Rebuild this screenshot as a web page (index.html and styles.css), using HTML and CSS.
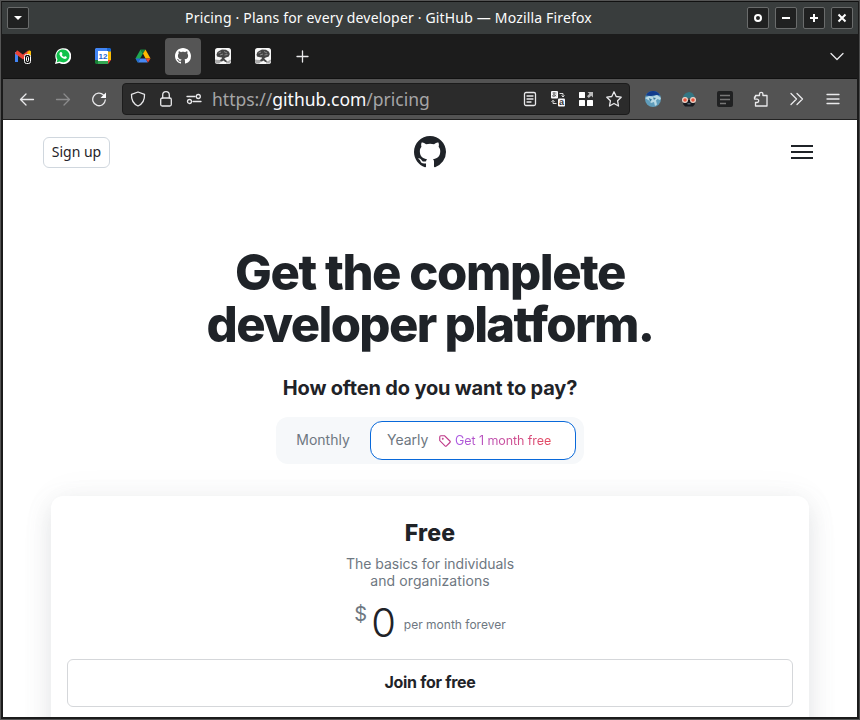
FILE: index.html
```
<!DOCTYPE html>
<html lang="en">
<head>
<meta charset="utf-8">
<title>Pricing · Plans for every developer · GitHub</title>
<link rel="stylesheet" href="styles.css">
</head>
<body>
<svg class="defs" width="0" height="0">
  <symbol id="mark" viewBox="0 0 16 16"><path d="M8 0C3.580 0 0 3.580 0 8c0 3.540 2.290 6.530 5.470 7.590.4.070.55-.17.55-.38 0-.19-.01-.82-.01-1.490-2.010.37-2.530-.49-2.690-.94-.09-.23-.48-.94-.82-1.130-.28-.15-.68-.52-.01-.53.63-.01 1.080.58 1.230.82.72 1.210 1.870.87 2.330.66.07-.52.28-.87.51-1.070-1.780-.2-3.640-.89-3.640-3.950 0-.87.31-1.590.82-2.150-.08-.2-.36-1.020.08-2.120 0 0 .67-.21 2.200.82.64-.18 1.320-.27 2-.27s1.360.09 2 .27c1.530-1.040 2.200-.82 2.200-.82.44 1.100.16 1.920.08 2.120.51.56.82 1.270.82 2.150 0 3.070-1.870 3.750-3.650 3.950.29.25.54.73.54 1.480 0 1.070-.01 1.930-.01 2.200 0 .21.15.46.55.38A8.010 8.010 0 0 0 16 8c0-4.420-3.580-8-8-8z"/></symbol>
  <symbol id="tree" viewBox="0 0 16 16"><rect width="16" height="16" rx="2.5" fill="#f6f6f6"/><path d="M1.500 6.500l1-2.500L5 2.500l2-1 4 .3 3 2 .8 2.200-1 2.500-3 1-1.500.8.5 1 3 2.500-2.500.2-2-1.500L7 13.500l-4-.3L6.500 11 7 9.500 5 9.300l-3-.8z" fill="#444"/><path d="M3.500 5l2.500-1M5 7l3-1M9 3.500l3 1.500M9.500 7l3-.5" stroke="#999" stroke-width=".8"/><path d="M0 11.500l4.500.5 2 1.500L4 15.500H2.500A2.500 2.500 0 0 1 0 13zM11 14l5-2.500V13l-2 2.500h-3z" fill="#aaa"/></symbol>
</svg>
<div class="window">
  <header class="titlebar">
    <span class="wbtn"><svg width="20" height="20"><path d="M6 8h8l-4 4z" fill="#fff"/></svg></span>
    <span class="title">Pricing · Plans for every developer · GitHub — Mozilla Firefox</span>
    <span class="wbtns">
      <span class="wbtn"><svg width="20" height="20"><circle cx="10" cy="10" r="3" class="wl"/></svg></span>
      <span class="wbtn"><svg width="20" height="20"><path d="M6 10h8" class="wl"/></svg></span>
      <span class="wbtn"><svg width="20" height="20"><path d="M6 10h8M10 6v8" class="wl"/></svg></span>
      <span class="wbtn"><svg width="20" height="20"><path d="M6.500 6.500l7 7M13.500 6.500l-7 7" class="wl"/></svg></span>
    </span>
  </header>
  <nav class="tabs">
    <span class="tab"><svg width="16" height="16"><path d="M1.500 14V4" stroke="#4285f4" stroke-width="3"/><path d="M14.500 8V4" stroke="#fbbc04" stroke-width="3"/><path d="M1 3.800l7 5.200 6.500-5.200" fill="none" stroke="#ea4335" stroke-width="3.800"/><path d="M12.300 4.500L14.500 2.300 16 3.200V6l-3.700 2.600z" fill="#fbbc04"/><rect x="9.500" y="6.500" width="6" height="9" rx="2" fill="#111" stroke="#fff"/><rect x="11.500" y="8.500" width="2" height="5" rx="1" fill="none" stroke="#fff"/></svg></span>
    <span class="tab"><svg width="16" height="16"><path d="M0 16l1.200-4.200A8 8 0 1 1 4.200 15z" fill="#fff"/><path d="M1.700 14.300l.8-2.900A6.500 6.500 0 1 1 4.700 13.500z" fill="#10c24b"/><path d="M5.500 4l1.300.2.700 1.700-.7 1c.5 1 1.300 1.700 2.300 2.200l1-1 1.700.9c0 1.800-1.500 2.200-2.800 1.800C6.700 10.200 5 8.200 4.500 6.500c-.2-1 .2-1.900 1-2.500z" fill="#fff"/></svg></span>
    <span class="tab"><svg width="16" height="16"><path d="M1 0h11v3.500H3V12H0V1z" fill="#4285f4"/><path d="M12 0h3l1 1v3h-4z" fill="#1967d2"/><path d="M13 3.500h3V12h-3z" fill="#fbbc04"/><path d="M3 13h10v3H3z" fill="#34a853"/><path d="M0 12h3v4H1l-1-1z" fill="#188038"/><path d="M13 12h3l-3 4z" fill="#ea4335"/><path d="M3 3h10v10H3z" fill="#fff"/><text x="8" y="11.300" class="cal">12</text></svg></span>
    <span class="tab"><svg width="16" height="16"><path d="M5.500 1.500L.5 10.500l2.300 4L8 5.500z" fill="#20a652"/><path d="M5.500 1.500h5L8 5.500z" fill="#17813b"/><path d="M10.500 1.500l5 9h-5L8 5.500z" fill="#ffba00"/><path d="M5.300 10.500h5.200l2.300 4h-10z" fill="#4688f4"/><path d="M.5 10.500h4.800l-2.500 4z" fill="#2468db"/><path d="M10.500 10.500h5l-2.500 4z" fill="#ea4335"/></svg></span>
    <span class="tab active"><svg width="16" height="16" fill="#fff"><use href="#mark"/></svg></span>
    <span class="tab"><svg width="16" height="16"><use href="#tree"/></svg></span>
    <span class="tab"><svg width="16" height="16"><use href="#tree"/></svg></span>
    <span class="tab"><svg class="ln" width="16" height="16"><path d="M2 8.500h11M7.500 3v11"/></svg></span>
    <span class="tab last"><svg class="ln" width="16" height="16"><path d="M2 5.500l6 6 6-6"/></svg></span>
  </nav>
  <div class="toolbar">
    <span class="ic"><svg class="ln" width="16" height="16"><path d="M14.500 8.500H2M7 3L1.500 8.500 7 14"/></svg></span>
    <span class="ic"><svg class="ln dim" width="16" height="16"><path d="M1.500 8.500h13M9 3l5.500 5.500L9 14"/></svg></span>
    <span class="ic"><svg class="ln" width="16" height="16"><path d="M14.300 9A6.300 6.300 0 1 1 12.500 4"/><path d="M15 1.500v5.500H9.500z" fill="#fbfbfe" stroke="none"/></svg></span>
    <div class="url">
      <svg class="ln" width="16" height="16"><path d="M8 1l6.500 2.300C14.800 8.500 12.500 13 8 15 3.500 13 1.200 8.500 1.500 3.300z"/></svg>
      <svg class="ln" width="16" height="16"><rect x="2.700" y="7" width="10.600" height="8" rx="1.500"/><path d="M4.700 7V4a3.300 3.300 0 0 1 6.600 0v3"/></svg>
      <svg class="ln" width="16" height="16"><path d="M1 5.500h8M7 10.500h8"/><circle cx="12.300" cy="5.500" r="2"/><circle cx="3.500" cy="10.500" r="2"/></svg>
      <span class="addr">https://<b>github.com</b>/pricing</span>
      <svg class="ln" width="16" height="16"><rect x="2.500" y="1.500" width="11" height="13" rx="1.500"/><path d="M5 5h6M5 8h6M5 11h4"/></svg>
      <svg width="16" height="16"><rect x="1" width="7" height="7.500" rx="1" fill="#fbfbfe"/><path d="M2.500 2h4M4 1v4.500M6 3.500c-.5 2-3.500 2.800-3.500 1.300S6 3.500 6 5.500" stroke="#555" stroke-width=".8" fill="none"/><rect x="8" y="7.500" width="7" height="8" rx="1" fill="#fbfbfe"/><text x="11.500" y="14" class="tra">a</text><path d="M9.500 2.500h3.500v3M11.500 4.500L13 6l1.500-1.500M6.500 12.500H3v-3M1.500 10.800L3 9.300l1.500 1.500" stroke="#ddd" fill="none"/></svg>
      <svg width="16" height="16" fill="#fff"><rect x="1" y="1" width="6" height="6" rx=".5"/><rect x="1" y="9" width="6" height="6" rx=".5"/><rect x="9" y="9" width="6" height="6" rx=".5"/><path d="M9.500 1H15v5.500l-1.800-1.800L10.800 7 9 5.200l2.400-2.400z" fill="#bbb"/></svg>
      <svg class="ln" width="16" height="16"><path d="M8 .8l2.200 4.700 5 .7-3.600 3.600.9 5.200L8 12.500 3.500 15l.9-5.200L.8 6.200l5-.7z"/></svg>
    </div>
    <span class="ic"><svg width="16" height="16"><circle cx="8" cy="8" r="8" fill="#5f9dbb"/><path d="M.8 4.500A8 8 0 0 1 15.200 4.500L11 4 6 5z" fill="#123c8c"/><path d="M0 7l4-2 4 .5L12 4l4 3-1 2-2.500-1L11 9.500l1 4-2 1.500-1-4-3 1-2-2.500z" fill="#b9d9e4"/><path d="M4 7l3 1.500L5 11zM8 6.500l3 .5-2 2z" fill="#397b9c"/></svg></span>
    <span class="ic"><svg width="16" height="16"><path d="M2 7c0-3 2-4 3-5l3-1c3 0 5 2 6 6z" fill="#337683"/><path d="M3 9h10l1 4-2 2.500H4L2 13z" fill="#171a20"/><circle cx="4" cy="9" r="2.400" fill="#e8533b" stroke="#ead6cb" stroke-width="1.200"/><circle cx="12" cy="9" r="2.400" fill="#e8533b" stroke="#ead6cb" stroke-width="1.200"/><path d="M6.500 12h3v1.500h-3z" fill="#567"/></svg></span>
    <span class="ic"><svg width="16" height="16"><rect width="16" height="16" rx="2" fill="#202122"/><path d="M3 4.500h10M3 8.500h10M3 12.500h6" stroke="#777" stroke-width="1.500"/></svg></span>
    <span class="ic"><svg class="ln" width="16" height="16"><path d="M2.500 6V4.500h4V3a1.700 1.700 0 0 1 3.400 0v1.500H14V15H2.500v-3.500H4a1.700 1.700 0 0 0 0-3.400H1.500V6z"/></svg></span>
    <span class="ic"><svg class="ln" width="16" height="16"><path d="M2 2.500L7.500 8 2 13.500M8 2.500L13.500 8 8 13.500"/></svg></span>
    <span class="ic"><svg class="ln" width="16" height="16"><path d="M2 3.500h12M2 8h12M2 12.500h12"/></svg></span>
  </div>
  <main class="page">
    <div class="sitebar">
      <a class="signup">Sign up</a>
      <svg width="32" height="32" fill="#1f2328"><use href="#mark"/></svg>
      <span class="burger"><i></i><i></i><i></i></span>
    </div>
    <h1><span class="l1">Get the complete</span><br><span class="l2">developer platform.</span></h1>
    <h2>How often do you want to pay?</h2>
    <div class="toggle">
      <span class="opt">Monthly</span>
      <span class="opt on"><span class="yr">Yearly</span><svg width="12" height="12" viewBox="0 0 16 16" fill="none" stroke="#bf3989" stroke-width="1.500"><path d="M1 2.500Q1 1 2.500 1h5l7 7q1 1 0 2L10 14.500q-1 1-2 0l-7-7z"/><circle cx="5" cy="5" r=".5"/></svg><span class="promo">Get 1 month free</span></span>
    </div>
    <section class="card">
      <h3>Free</h3>
      <p class="desc"><span class="d1">The basics for individuals</span><br><span class="d2">and organizations</span></p>
      <div class="price"><span class="cur">$</span><span class="num">0</span><span class="per">per month forever</span></div>
      <a class="join"><span>Join for free</span></a>
    </section>
  </main>
</div>
</body>
</html>
```
FILE: styles.css
```
* { box-sizing: border-box; }
html, body { margin: 0; height: 720px; overflow: hidden; }
body { background: #1d1e1e; font-family: "Noto Sans", sans-serif; }
svg { display: block; flex: none; }
.defs { position: absolute; }
.window { height: 720px; border: 1px solid #555; border-right-color: #4a4a4a; padding: 0 2px 2px; display: flex; flex-direction: column; background: #1b1b1b; }
.titlebar { height: 33px; flex: none; background: #393d3d; border-top: 1px solid #111; margin: 0 -1px; padding: 0 5px; display: flex; align-items: center; }
.title { flex: 1; margin-left: 1px; padding-bottom: 2px; text-align: center; color: #fcfcfc; font-size: 14px; letter-spacing: .17px; white-space: nowrap; }
.wbtns { display: flex; gap: 6px; }
.wbtn { width: 22px; height: 22px; border: 1px solid #6a6c6c; border-radius: 2px; background: #202121; display: block; }
.wl { fill: none; stroke: #fff; stroke-width: 2; }
.tabs { height: 45px; flex: none; background: #1c1c1c; border-bottom: 1px solid #111; display: flex; align-items: center; padding: 0 2px; gap: 4px; }
.tab { width: 36px; height: 37px; display: flex; align-items: center; justify-content: center; border-radius: 4px; }
.tab.active { background: #555; }
.tab.last { margin-left: auto; }
.ln { fill: none; stroke: #e9e9eb; stroke-width: 1.3; stroke-linejoin: round; stroke-linecap: round; }
.ln.dim { stroke: #8b8b8c; }
.cal { font: bold 8px "Liberation Sans", sans-serif; fill: #2467cf; text-anchor: middle; }
.tra { font: bold 9px "Liberation Sans", sans-serif; fill: #333; text-anchor: middle; }
.toolbar { height: 41px; flex: none; background: #535353; border-bottom: 1px solid #222; display: flex; align-items: center; padding: 0 6px; }
.ic { width: 36px; height: 36px; display: flex; align-items: center; justify-content: center; }
.url { flex: 1; height: 32px; margin: 0 5px 0 5px; background: #2b2b2b; border: 1px solid #1c1c1c; border-radius: 4px; display: flex; align-items: center; padding: 0 7px; gap: 12px; color: #a5a5a6; }
.addr { flex: 1; font-size: 17.500px; line-height: 28px; white-space: nowrap; margin-left: -2px; }
.addr b { font-weight: 400; color: #fbfbfe; }
.page { flex: 1; min-height: 0; overflow: hidden; background: #fff; color: #1f2328; display: flex; flex-direction: column; align-items: center; text-align: center; font-family: Inter, sans-serif; }
.sitebar { width: 774px; height: 64px; flex: none; display: grid; grid-template-columns: 1fr 32px 1fr; align-items: center; }
.signup { justify-self: start; width: 67px; height: 31px; border: 1px solid #d0d7de; border-radius: 6px; font: 14px/27px "Noto Sans", sans-serif; }
.burger { justify-self: end; display: grid; gap: 4px; margin-right: 4px; }
.burger i { display: block; width: 22px; height: 2px; background: #1f2328; }
h1 { font-size: 49px; line-height: 52px; font-weight: 800; margin: 63px 0 0; white-space: nowrap; }
.l1 { letter-spacing: -1.450px; }
.l2 { letter-spacing: -1.680px; }
h2 { font-size: 20px; line-height: 28px; margin: 23px 0 15px; font-weight: 700; letter-spacing: -.18px; white-space: nowrap; }
.toggle { width: 308px; height: 47px; flex: none; background: #f6f8fa; border-radius: 12px; padding: 4px 8px 4px 4px; display: flex; color: #6e7781; font-size: 14px; line-height: 37px; }
.opt { width: 90px; padding-right: 4px; white-space: nowrap; }
.opt.on { width: 206px; height: 39px; background: #fff; border: 1px solid #0969da; border-radius: 12px; display: flex; align-items: center; padding: 0 0 0 16px; }
.yr { width: 52px; text-align: left; padding-bottom: 2px; }
.promo { font-size: 12.500px; letter-spacing: -.07px; margin-left: 4px; background: linear-gradient(90deg, #a857e5, #e5485d); -webkit-background-clip: text; background-clip: text; color: transparent; }
.card { width: 758px; height: 400px; flex: none; margin-top: 32px; border-radius: 12px; padding: 23px 16px; background: #fff; box-shadow: 0 8px 24px rgba(140,149,159,.2), 0 0 40px rgba(0,0,0,.04); }
h3 { font-size: 23px; line-height: 28px; margin: 0; font-weight: 800; letter-spacing: .2px; }
.desc { margin: 8px 0 0; font-size: 14px; line-height: 17px; color: #6e7781; }
.d1 { letter-spacing: -.03px; }
.d2 { letter-spacing: .1px; }
.price { height: 51px; margin-top: 9px; display: flex; justify-content: center; }
.cur { font-size: 20px; line-height: 32px; color: #6e7781; }
.num { font-size: 40px; line-height: 50px; font-weight: 300; margin-left: 4px; }
.per { font-size: 12px; line-height: 53px; color: #6e7781; margin-left: 8px; }
.join { display: block; height: 48px; margin-top: 10px; border: 1px solid #d5d7da; border-radius: 6px; font-size: 16px; line-height: 45px; font-weight: 700; letter-spacing: -.3px; }
```
